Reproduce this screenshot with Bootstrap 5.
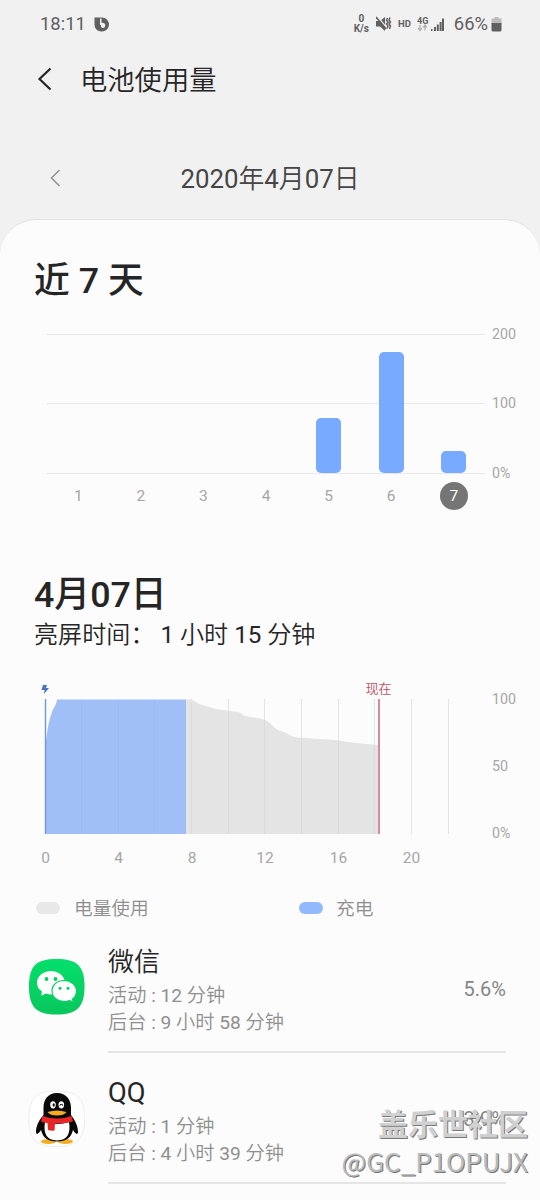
<!DOCTYPE html>
<html lang="zh-CN">
<head>
<meta charset="utf-8">
<meta name="viewport" content="width=device-width, initial-scale=1">
<title>电池使用量</title>
<link href="https://cdn.jsdelivr.net/npm/bootstrap@5.3.0/dist/css/bootstrap.min.css" rel="stylesheet">
<style>
body{font-family:Roboto,"Noto Sans CJK SC DemiLight","Noto Sans CJK SC",sans-serif;background:#f1f1f1;color:#252525;width:540px;height:1200px;overflow:hidden;line-height:1}
svg{display:block;flex:none}
.statusbar{height:48px;padding:0 37px 0 40px;font-size:18.4px;color:#606060}
.speed{font-size:10px;line-height:10px;font-weight:700;text-align:center}
.titlebar{height:62px;padding-left:37px}
.titlebar h1{font-size:27.3px;font-weight:400;margin-left:28px;padding-top:4px}
.daterow{height:109px;padding:27px 50px 0}
.daterow h2{font-size:25.8px;color:#454545;font-weight:400;padding-top:2px}
.sheet{background:#fcfcfc;border-top:1px solid #e2e2e2;border-radius:36px 36px 0 0;height:981px;padding-top:41px}
.heading{font-family:Roboto,"Noto Sans CJK SC",sans-serif;font-size:35.8px;line-height:40px;font-weight:500;padding-left:34px}
.weekchart{margin:33px 0 0 47px}
.plot{width:438px;height:140px;border-bottom:1px solid #e8e8e8;background:linear-gradient(#e8e8e8,#e8e8e8) 0 0/100% 1px no-repeat,linear-gradient(#e8e8e8,#e8e8e8) 0 69px/100% 1px no-repeat}
.daybar{width:25px;background:#78aaff;border-radius:5px}
.yaxis{font-size:14.2px;color:#a6a6a6;height:153px;margin:-7px 0 -6px 7px}
.days{width:438px;height:28px;margin:8px 0 0 47px;font-size:15.5px;line-height:30px;color:#a6a6a6}
.today{background:#757575;color:#fff;width:28px;height:28px;line-height:29px}
.screen-on{font-size:24.1px;line-height:34px;padding-left:34px;margin-top:3px}
.legendrow{padding-left:36px;height:26px;font-size:18.7px;line-height:22px;color:#8d8d8d;margin-top:16px}
.pill{width:24px;height:12px;border-radius:6px;margin-bottom:2px}
.applist{padding:21px 34px 0 28px}
.appinfo{margin-left:22px;height:131px;padding-top:25px;border-bottom:2px solid #e5e5e5}
.appname{font-size:26px;line-height:31px;font-weight:400;margin-bottom:4px}
.usage{font-size:19.2px;line-height:27px;color:#8f8f8f}
.percent{font-size:20px;color:#858585}
.applist>div:first-child .appinfo{height:110px;padding-top:4px}
.stamp{position:absolute;right:12px;top:1101px;text-align:right;color:#d0d0d0;text-shadow:1px 1px 0 #777;white-space:nowrap;font-family:"Noto Sans CJK SC",sans-serif}
.stamp b{font-size:30px;line-height:42px;display:block;font-weight:700}
.stamp span{font-size:26px;line-height:36px;display:block;color:#bbb}
</style>
</head>
<body>
<header>
  <div class="statusbar d-flex align-items-center">
    <span>18:11</span>
    <svg class="ms-2" width="15" height="15" viewBox="0 0 15 15"><path fill="#606060" fill-rule="evenodd" d="M.5 .5H6V14.300C2.500 13.500 .5 11 .5 7.500ZM6 .5H8.500A7 7 0 0 1 7.500 14.500Q6.500 14.500 6 14.300V8H6.800C6.800 10 7.800 11 9 11C10.500 11 11.200 9.800 11.200 8.300C11.200 6.500 10 5.500 8.300 5.700H7.500V1.500H6Z"/></svg>
    <div class="speed ms-auto">0<br>K/s</div>
    <svg style="margin-left:7px" width="16" height="16" viewBox="0 0 16 16"><path fill="#606060" d="M0 5H4L9 1V15L4 10.500H0Z"/><path d="M1 0L11 12" stroke="#f1f1f1" stroke-width="1.200"/><path d="M0 1L10 13" stroke="#606060" stroke-width="1.600"/><path d="M11.500 2L10.500 4L12 6L10.500 8L12 10L11 12.500M14 1.500L13 4L14.500 6L13 8L14.500 10L13.500 13" fill="none" stroke="#606060" stroke-width="1.500"/></svg>
    <b style="font-size:9.500px;margin-left:6px">HD</b>
    <svg style="margin-left:6px" width="29" height="17" viewBox="0 0 29 17"><text x="0" y="7.500" font-size="9" font-weight="700" fill="#606060">4G</text><path d="M3 9V14M1 12L3 14.500L5 12M8 14.500V9.500M6 11.500L8 9L10 11.500" fill="none" stroke="#aaa" stroke-width="1.200"/><path fill="#606060" d="M14 13h1.500v2H14zM17 11h2v4h-2zM19.800 8.500h2V15h-2zM22.600 6h2v9h-2zM25 2.500h2V15h-2z"/></svg>
    <span style="margin-left:8px">66%</span>
    <svg style="margin-left:3px" width="12" height="15" viewBox="0 0 12 15"><path fill="#bbb" d="M3.500 0H7.500V1.500H10.500V7H.500V1.500H3.500Z"/><path fill="#606060" d="M.5 6H10.500V13Q10.500 14.500 9 14.500H2Q.5 14.500 .5 13Z"/></svg>
  </div>
  <div class="titlebar d-flex align-items-center">
    <svg width="15" height="24" viewBox="0 0 15 24"><path d="M13.500 1.500L2.500 12L13.500 22.500" fill="none" stroke="#252525" stroke-width="2.200"/></svg>
    <h1 class="mb-0">电池使用量</h1>
  </div>
  <div class="daterow d-flex align-items-center justify-content-between">
    <svg width="10" height="18" viewBox="0 0 10 18"><path d="M9.500 1L1.500 9L9.500 17" fill="none" stroke="#919191" stroke-width="1.500"/></svg>
    <h2 class="mb-0">2020年4月07日</h2><span style="width:10px"></span>
  </div>
</header>
<main class="sheet">
  <section>
    <h3 class="heading mb-0">近 7 天</h3>
    <div class="weekchart d-flex">
      <div class="plot d-flex align-items-end">
        <div class="col"></div><div class="col"></div><div class="col"></div><div class="col"></div>
        <div class="col d-flex justify-content-center"><div class="daybar" style="height:55px"></div></div>
        <div class="col d-flex justify-content-center"><div class="daybar" style="height:121px"></div></div>
        <div class="col d-flex justify-content-center"><div class="daybar" style="height:22px"></div></div>
      </div>
      <div class="yaxis d-flex flex-column justify-content-between"><span>200</span><span>100</span><span>0%</span></div>
    </div>
    <div class="days d-flex align-items-center text-center">
      <span class="col">1</span><span class="col">2</span><span class="col">3</span><span class="col">4</span><span class="col">5</span><span class="col">6</span><span class="col d-flex justify-content-center"><span class="today rounded-circle">7</span></span>
    </div>
  </section>
  <section style="margin-top:65px">
    <h3 class="heading mb-0">4月07日</h3>
    <p class="screen-on mb-0">亮屏时间： 1 小时 15 分钟</p>
    <svg width="540" height="220" viewBox="0 660 540 220" style="margin-top:8px">
      <path d="M191.500 699V834M228.500 699V834M264.500 699V834M301.500 699V834M338.500 699V834M374.500 699V834M411.500 699V834M448.500 699V834" stroke="#e4e4e4"/>
      <path fill="#e4e4e4" d="M186 699.500H190C196 701 197 704 204 705.500C211 707 213 709 222 710L238 712C242 713 242 716 248 716.500C256 718 262 718 267 721C273 725 274 729 281 731C288 733 289 736 297 737.500L335 740C348 742 352 743 379 745V834H186Z"/>
      <path fill="#9fbff6" d="M45 834V748C47 735 48 722 52 712C54 707 56 706 57 699.500H186V834Z"/>
      <path d="M81.500 700V834M118.500 700V834M154.500 700V834" stroke="#9abbf1"/>
      <path d="M191.500 703V834M228.500 711V834M264.500 720V834M301.500 738V834M338.500 741V834M374.500 745V834" stroke="#dadada"/>
      <path d="M45.500 699V834" stroke="#6f98da" stroke-width="1.400"/>
      <path d="M379 699V834" stroke="#d58b98" stroke-width="2"/>
      <path fill="#4a76bd" d="M43 685H47L46 688H49L44 694L44.500 690H41.500Z"/>
      <text x="378.500" y="692.500" font-size="13" text-anchor="middle" fill="#bd5265">现在</text>
      <g font-size="14.200" fill="#a6a6a6"><text x="492" y="704">100</text><text x="492" y="771">50</text><text x="492" y="838">0%</text></g>
      <g font-size="15.500" fill="#a6a6a6" text-anchor="middle"><text x="45.500" y="863">0</text><text x="118.500" y="863">4</text><text x="192" y="863">8</text><text x="265" y="863">12</text><text x="338.500" y="863">16</text><text x="411.500" y="863">20</text></g>
    </svg>
    <div class="legendrow d-flex align-items-center">
      <span class="pill" style="background:#e8e8e8"></span><span style="margin-left:14px;width:225px">电量使用</span>
      <span class="pill" style="background:#91b9fc"></span><span style="margin-left:13px">充电</span>
    </div>
  </section>
  <section class="applist">
    <div class="d-flex">
      <svg style="margin-top:15px" width="58" height="58" viewBox="0 0 58 58">
        <defs><linearGradient id="wg" x2="0" y2="1"><stop stop-color="#04df6c"/><stop offset="1" stop-color="#09c75c"/></linearGradient></defs>
        <path fill="url(#wg)" d="M28.500 1C49 1 56.500 8 56.500 28.500S49 56.500 28.500 56.500S1 49 1 28.500S8 1 28.500 1Z"/>
        <path fill="#fff" d="M23 13C15 13 9 18.200 9 25C9 28.700 11 31.500 14 33.500L13 37.800L18 35.600Q24 37.600 30 35Q37 31 37 24.500C36.500 18 30.500 13 23 13Z"/>
        <path fill="#fff" stroke="#08d064" stroke-width="1.200" d="M36 22.500C29 22.500 24 27 24 33S29 43.500 36 43.500Q39 43.500 41.500 42.500L45.500 44.500L44.500 41Q48.500 38 48.500 33C48.500 27 43 22.500 36 22.500Z"/>
        <g fill="#08cc62"><circle cx="18.500" cy="21" r="1.900"/><circle cx="27.500" cy="21" r="1.900"/><circle cx="32" cy="30.300" r="1.500"/><circle cx="40" cy="30.300" r="1.500"/></g>
      </svg>
      <div class="appinfo flex-grow-1 d-flex justify-content-between">
        <div><h4 class="appname">微信</h4><div class="usage">活动 : 12 分钟</div><div class="usage">后台 : 9 小时 58 分钟</div></div>
        <span class="percent" style="margin-top:32px">5.6%</span>
      </div>
    </div>
    <div class="d-flex">
      <svg style="margin-top:37px" width="58" height="58" viewBox="0 0 58 58">
        <path fill="#fff" stroke="#ececec" d="M28.500 1C49 1 56.500 8 56.500 28.500S49 56.500 28.500 56.500S1 49 1 28.500S8 1 28.500 1Z"/>
        <ellipse cx="20.500" cy="51.500" rx="7.500" ry="2.400" fill="#f5ac21"/><ellipse cx="37.500" cy="51.500" rx="7.500" ry="2.400" fill="#f5ac21"/>
        <path fill="#080808" d="M29 3C19.500 3 15.500 10 15.500 18V25C11 30 8 36 8 42C8.500 46 11 43 13 40C15 48 20 51.500 29 51.500S43 48 45 40C47 43 49.500 46 50 42C50 36 47 30 43 25V18C43 10 38.500 3 29 3Z"/>
        <path fill="#fff" d="M17 32Q29 36 41 32Q44 50 29 50.500Q14 50 17 32Z"/>
        <path fill="#e92626" d="M14.500 26Q29 31 43.500 26L45 31.500Q37 34 27 33.500L26.500 40.500Q23 41 20 40L19.500 33Q15.500 32.500 13 31.500Z"/>
        <ellipse cx="25" cy="14.800" rx="2.800" ry="3.600" fill="#fff"/><ellipse cx="33.300" cy="14.800" rx="2.800" ry="3.600" fill="#fff"/><ellipse cx="25.700" cy="15" rx="1.100" ry="1.700" fill="#111"/><path d="M31.800 15.500Q33.300 13 35 15.500" fill="none" stroke="#111" stroke-width="1.200"/>
        <path fill="#f5ac21" d="M19.500 22Q29 19 38.500 22Q36 25.500 29 25.500T19.500 22Z"/>
      </svg>
      <div class="appinfo flex-grow-1 d-flex justify-content-between">
        <div><h4 class="appname" style="font-size:27.300px">QQ</h4><div class="usage">活动 : 1 分钟</div><div class="usage">后台 : 4 小时 39 分钟</div></div>
        <span class="percent" style="margin-top:31px">3.9%</span>
      </div>
    </div>
  </section>
</main>
<div class="stamp"><b>盖乐世社区</b><span>@GC_P1OPUJX</span></div>
<script src="https://cdn.jsdelivr.net/npm/bootstrap@5.3.0/dist/js/bootstrap.bundle.min.js"></script>
</body>
</html>
